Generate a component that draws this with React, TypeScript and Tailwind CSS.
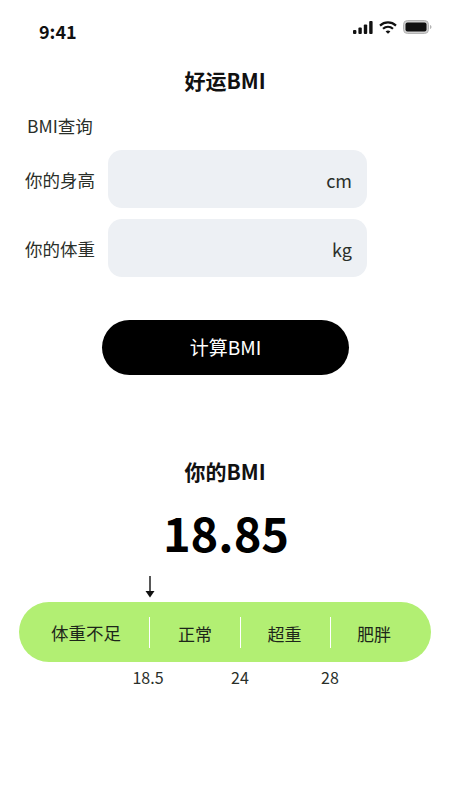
const font = { fontFamily: '"Noto Sans CJK SC", "Noto Sans", sans-serif' };

function StatusBar() {
  return (
    <div className="flex h-[62px] items-start justify-between pl-[39px] pr-[18px] pt-[20px]">
      <span className="text-[18px] font-bold leading-[22px] text-[#111]">9:41</span>
      <div className="flex items-center gap-[6px]">
        <svg width="20" height="13" viewBox="0 0 20 13" fill="#111">
          <rect x="0" y="9" width="3.400" height="4" rx="1" />
          <rect x="5.400" y="6.500" width="3.400" height="6.500" rx="1" />
          <rect x="10.800" y="3.500" width="3.400" height="9.500" rx="1" />
          <rect x="16.200" y="0" width="3.400" height="13" rx="1" />
        </svg>
        <svg width="18" height="13" viewBox="0 0 18 13" fill="none" stroke="#111" strokeWidth="2.200">
          <path d="M1 4.600C5.600 0.400 12.400 0.400 17 4.600" />
          <path d="M4 7.800C6.900 5.200 11.100 5.200 14 7.800" />
          <path d="M9 12.800 6.600 10.400C8 9.200 10 9.200 11.400 10.400Z" fill="#111" stroke="none" />
        </svg>
        <svg width="29" height="14" viewBox="0 0 29 14" fill="none">
          <rect x="0.500" y="0.500" width="25" height="13" rx="4" fill="#d0d0d0" stroke="#b4b4b4" />
          <rect x="2.500" y="2.500" width="21" height="9" rx="2" fill="#111" />
          <path d="M27 5v4c.9-.3 1.500-1.100 1.500-2S27.900 5.300 27 5Z" fill="#b4b4b4" />
        </svg>
      </div>
    </div>
  );
}

function Field({ label, unit }: { label: string; unit: string }) {
  return (
    <div className="flex items-center">
      <span className="w-[108px] pl-[25px] pt-[2px] text-[17.500px] leading-[24px] text-[#2a2f2a]">{label}</span>
      <div className="flex h-[57.500px] w-[259px] items-center justify-end rounded-[14px] bg-[#edf0f4] pr-[15px] pt-[3px] text-[18px] text-[#2a2f2a]">
        {unit}
      </div>
    </div>
  );
}

export default function App() {
  return (
    <div className="h-[800px] w-[450px] overflow-hidden bg-white" style={font}>
      <StatusBar />
      <h1 className="h-[40px] text-center text-[21px] font-semibold leading-[37px] text-[#111]">好运BMI</h1>
      <p className="mt-[12px] pl-[27px] text-[17.500px] leading-[24px] text-[#2a2f2a]">BMI查询</p>
      <div className="mt-[12px] flex flex-col gap-[11.500px]">
        <Field label="你的身高" unit="cm" />
        <Field label="你的体重" unit="kg" />
      </div>
      <div className="ml-[102px] mt-[43.500px] flex h-[55px] w-[247px] items-center justify-center rounded-full bg-black text-[19px] text-white">
        计算BMI
      </div>
      <h2 className="mt-[83px] h-[30px] text-center text-[21px] font-semibold leading-[27px] text-[#111]">你的BMI</h2>
      <p className="mt-[13px] pl-[2px] text-center text-[47px] font-bold leading-[62px] text-black">18.85</p>
      <div className="mt-[13px] pl-[144px]">
        <svg width="12" height="22" viewBox="0 0 12 22" className="block">
          <path d="M6 0V16" stroke="#111" strokeWidth="1.400" />
          <path d="M1.500 15H10.500L6 21.500Z" fill="#111" />
        </svg>
      </div>
      <div className="mx-[19px] mt-[4px] grid h-[60px] w-[412px] grid-cols-[131px_91px_90px_100px] items-center rounded-[30px] bg-[#b2ef73] text-[17px] text-[#1d261a]">
        <div className="flex h-[31px] items-center justify-center border-r border-white pl-[4px] pt-[3px] text-[17.500px]">体重不足</div>
        <div className="flex h-[31px] items-center justify-center border-r border-white pt-[3px]">正常</div>
        <div className="flex h-[31px] items-center justify-center border-r border-white pr-[2px] pt-[3px]">超重</div>
        <div className="flex h-[31px] items-center justify-center pr-[14px] pt-[3px]">肥胖</div>
      </div>
      <div className="mt-[4px] flex pl-[118px] text-[16px] leading-[22px] text-[#2a2f2a]">
        <span className="w-[60px] text-center">18.5</span>
        <span className="ml-[32px] w-[60px] text-center">24</span>
        <span className="ml-[30px] w-[60px] text-center">28</span>
      </div>
    </div>
  );
}
